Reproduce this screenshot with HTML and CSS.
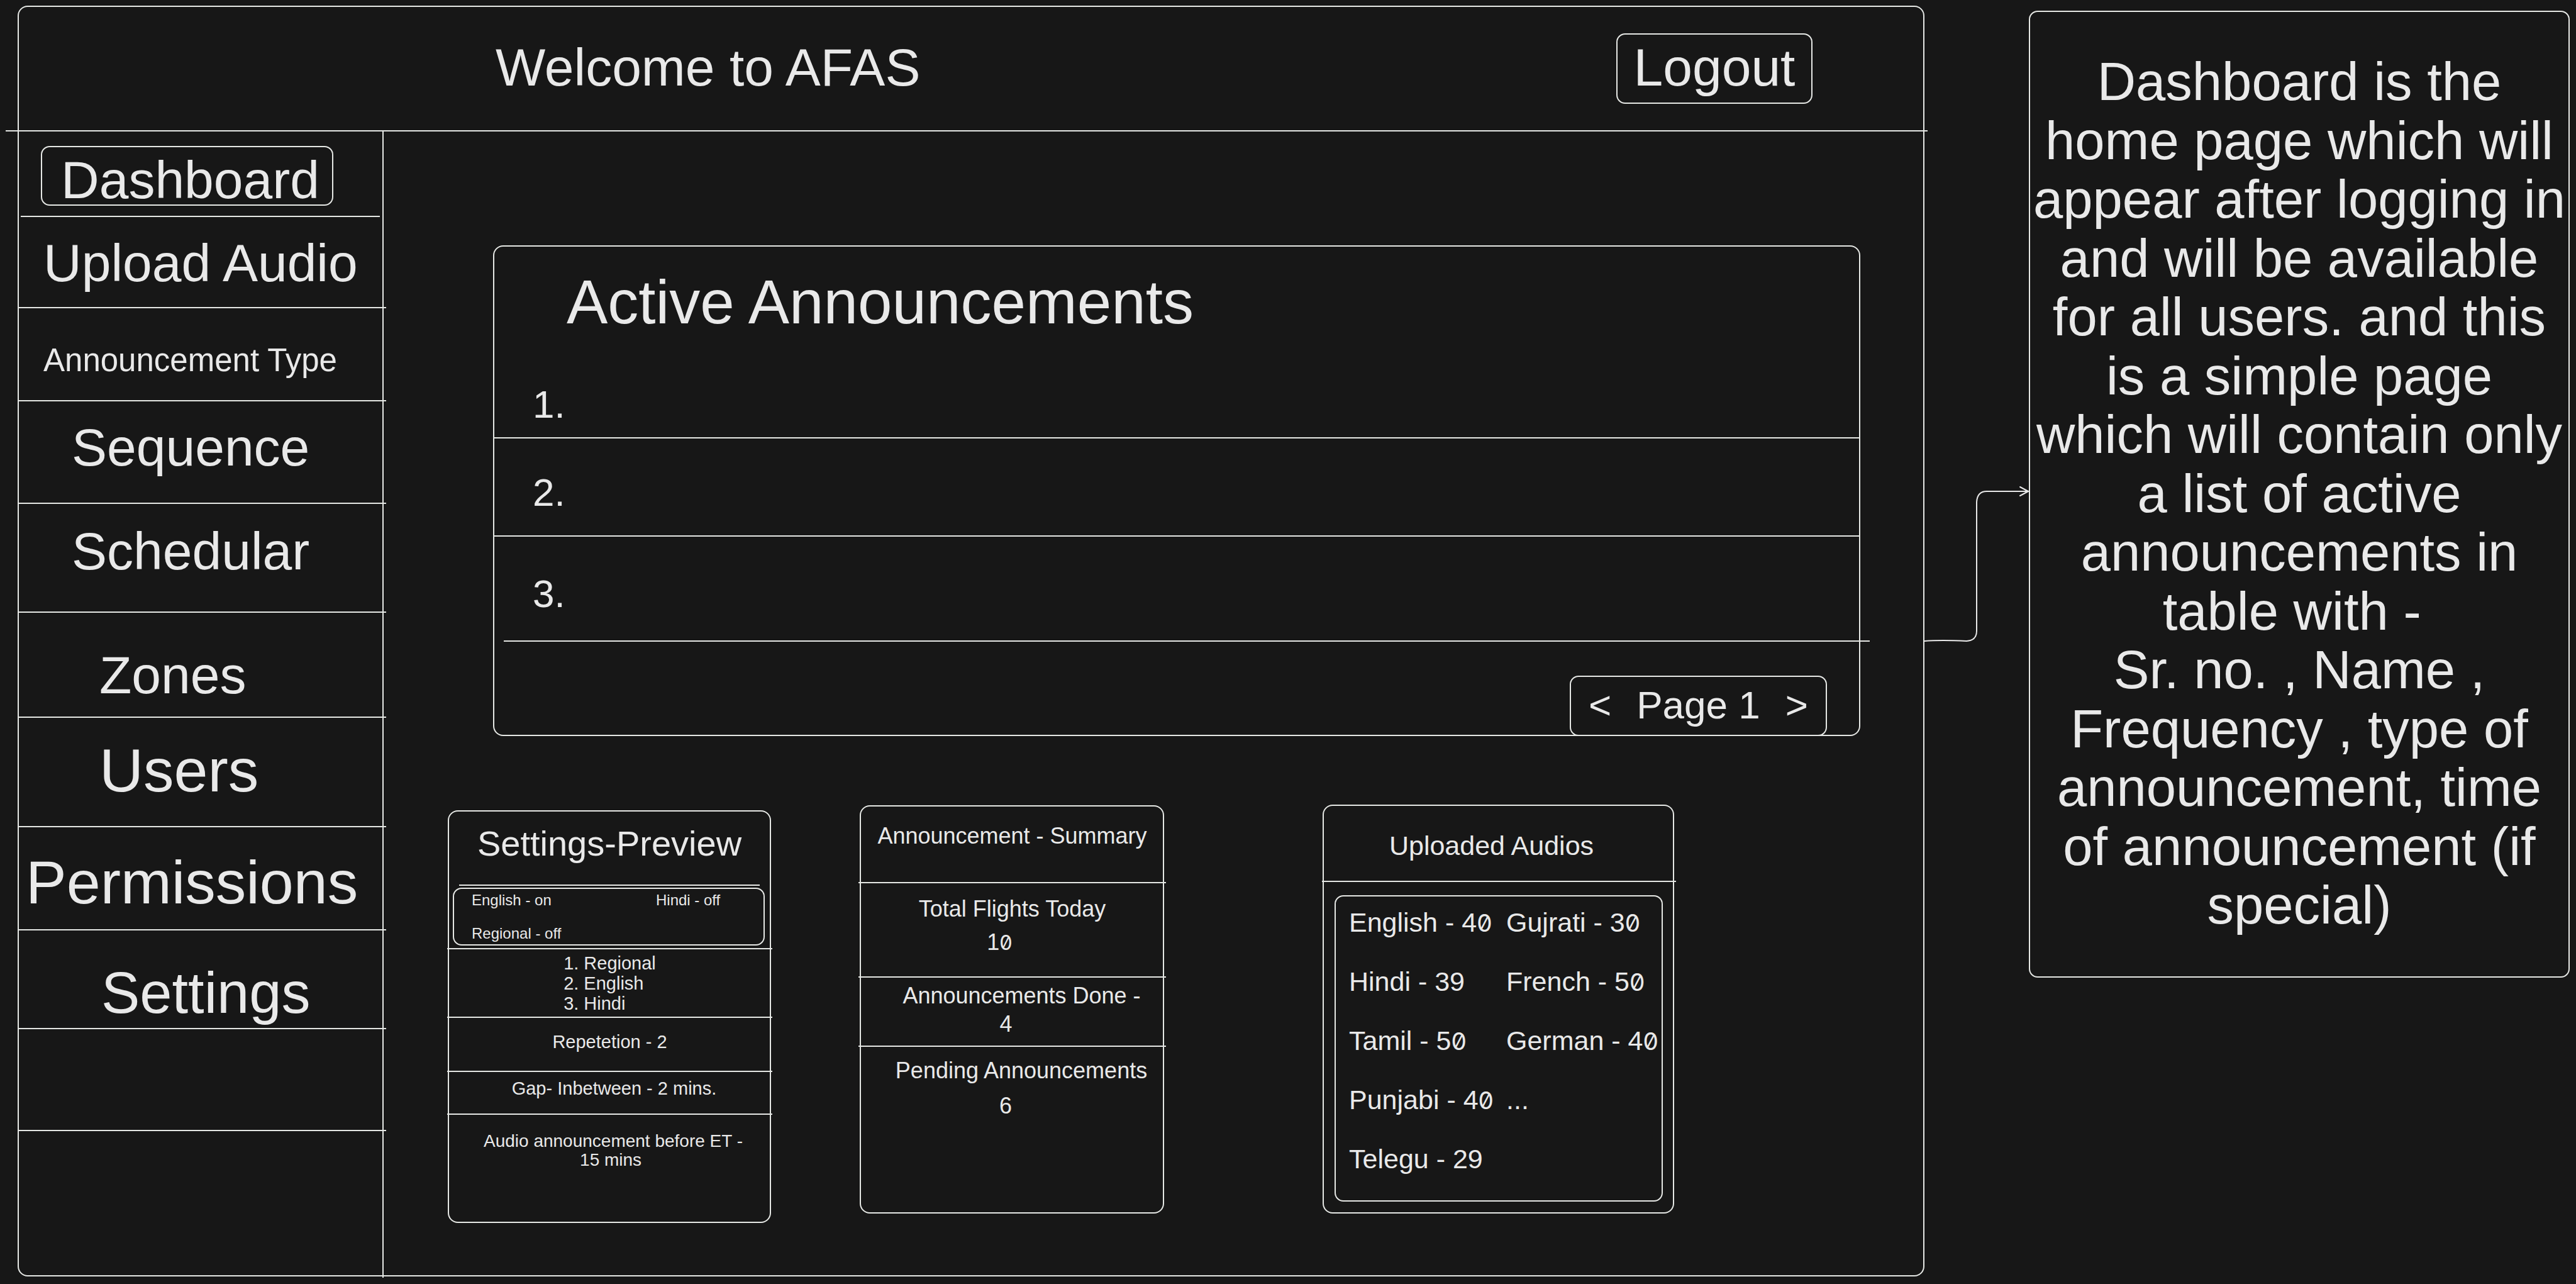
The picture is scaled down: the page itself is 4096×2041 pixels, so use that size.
FILE: index.html
```html
<!DOCTYPE html>
<html lang="en">
<head>
<meta charset="utf-8">
<title>AFAS Dashboard</title>
<link rel="stylesheet" href="styles.css">
</head>
<body>
<div class="board">
  <div class="frame">
    <header class="topbar">
      <h1 class="topbar-title">Welcome to AFAS</h1>
      <button class="logout" type="button">Logout</button>
    </header>
    <div class="workspace">
      <nav class="sidebar" aria-label="Main">
        <ul class="menu">
          <li class="menu-row row-dashboard"><a class="menu-link menu-link-active" href="#dashboard" aria-current="page">Dashboard</a></li>
          <li class="menu-row row-upload"><a class="menu-link" href="#upload">Upload Audio</a></li>
          <li class="menu-row row-type"><a class="menu-link" href="#type">Announcement Type</a></li>
          <li class="menu-row row-sequence"><a class="menu-link" href="#sequence">Sequence</a></li>
          <li class="menu-row row-schedular"><a class="menu-link" href="#schedular">Schedular</a></li>
          <li class="menu-row row-zones"><a class="menu-link" href="#zones">Zones</a></li>
          <li class="menu-row row-users"><a class="menu-link" href="#users">Users</a></li>
          <li class="menu-row row-permissions"><a class="menu-link" href="#permissions">Permissions</a></li>
          <li class="menu-row row-settings"><a class="menu-link" href="#settings">Settings</a></li>
          <li class="menu-row row-blank"></li>
        </ul>
      </nav>
      <main class="content">
        <section class="active">
          <h2 class="active-title">Active Announcements</h2>
          <ol class="active-list">
            <li class="active-row active-row-first">1.</li>
            <li class="active-row active-row-second">2.</li>
            <li class="active-row active-row-third">3.</li>
          </ol>
          <div class="active-footer">
            <div class="pager">
              <button class="pager-button" type="button" aria-label="Previous page">&lt;</button>
              <span>Page 1</span>
              <button class="pager-button" type="button" aria-label="Next page">&gt;</button>
            </div>
          </div>
        </section>

        <div class="cards">
          <section class="card settings">
            <h3 class="settings-title">Settings-Preview</h3>
            <div class="cell settings-languages">
              <div class="language-box">
                <span>English - on</span>
                <span>Hindi - off</span>
                <span>Regional - off</span>
              </div>
            </div>
            <div class="cell settings-order">
              <ol class="order-list">
                <li class="order-item"><span>1.</span><span>Regional</span></li>
                <li class="order-item"><span>2.</span><span>English</span></li>
                <li class="order-item"><span>3.</span><span>Hindi</span></li>
              </ol>
            </div>
            <p class="cell settings-repeat">Repetetion - 2</p>
            <p class="cell settings-gap">Gap- Inbetween - 2 mins.</p>
            <p class="settings-before">Audio announcement before ET -<br>15 mins&nbsp;</p>
          </section>

          <section class="card summary">
            <h3 class="cell summary-title">Announcement - Summary</h3>
            <div class="cell metric metric-total">
              <p class="metric-label">Total Flights Today</p>
              <p class="metric-value">1<span class="zero">0</span></p>
            </div>
            <div class="cell metric metric-done">
              <p class="metric-label">Announcements Done -</p>
              <p class="metric-value">4</p>
            </div>
            <div class="metric metric-pending">
              <p class="metric-label">Pending Announcements</p>
              <p class="metric-value">6</p>
            </div>
          </section>

          <section class="card uploads">
            <h3 class="cell uploads-title">Uploaded Audios</h3>
            <ul class="uploads-list">
              <li>English - 4<span class="zero">0</span></li>
              <li>Hindi - 39</li>
              <li>Tamil - 5<span class="zero">0</span></li>
              <li>Punjabi - 4<span class="zero">0</span></li>
              <li>Telegu - 29</li>
              <li>Gujrati - 3<span class="zero">0</span></li>
              <li>French - 5<span class="zero">0</span></li>
              <li>German - 4<span class="zero">0</span></li>
              <li>...</li>
            </ul>
          </section>
        </div>
      </main>
    </div>
  </div>

  <svg class="connector" viewBox="0 0 166 260" width="166" height="260" fill="none" stroke="currentColor" stroke-width="2" stroke-linecap="round" stroke-linejoin="round" aria-hidden="true">
    <path d="M0 249 Q26 247 67 249 Q83 248 83 233 V28 Q84 11 99 11 H165"/>
    <path d="M152 4 L165 11 L152 18"/>
  </svg>

  <aside class="note">
    <p class="note-text">Dashboard is the<br>home page which will<br>appear after logging in<br>and will be available<br>for all users. and this<br>is a simple page<br>which will contain only<br>a list of active<br>announcements in<br>table with -&nbsp;<br>Sr. no. , Name ,<br>Frequency , type of<br>announcement, time<br>of announcement (if<br>special)</p>
  </aside>
</div>
</body>
</html>
```
FILE: styles.css
```css
:root {
  --ink: #e9e9e9;
  --ground: #171717;
  --rule: 2px solid #e6e8e5;
}

* {
  box-sizing: border-box;
}

body,
h1,
h2,
h3,
p,
ul,
ol {
  margin: 0;
  padding: 0;
  font-size: inherit;
  font-weight: 400;
}

ul,
ol {
  list-style: none;
}

body {
  background: var(--ground);
  color: var(--ink);
  font-family: "Liberation Sans", Arial, sans-serif;
  font-size: 84px;
  line-height: 1.1;
}

a {
  color: inherit;
  text-decoration: none;
}

button {
  margin: 0;
  padding: 0;
  border: 0;
  background: none;
  color: inherit;
  font: inherit;
}

.board {
  display: grid;
  grid-template-columns: minmax(0, 1fr) 166px 860px;
  min-height: 100vh;
  padding: 9px 10px 12px 28px;
}

.frame {
  display: flex;
  flex-direction: column;
  border: var(--rule);
  border-radius: 16px;
}

/* Header: its rule runs past the frame on both sides */
.topbar {
  display: flex;
  align-items: center;
  justify-content: space-between;
  min-height: 198px;
  margin: 0 -7px 0 -21px;
  padding: 0 183px 0 779px;
  border-bottom: var(--rule);
}

.topbar-title {
  padding-bottom: 4px;
}

.logout {
  min-width: 312px;
  min-height: 112px;
  padding-bottom: 4px;
  border: var(--rule);
  border-radius: 14px;
}

.workspace {
  display: flex;
  flex: 1;
}

/* Sidebar */
.sidebar {
  flex: none;
  width: 580px;
  margin-bottom: -4px;
  border-right: var(--rule);
}

.menu {
  margin-right: -6px;
}

.menu-row {
  display: flex;
  align-items: center;
  border-bottom: var(--rule);
}

.menu-link {
  white-space: nowrap;
}

.row-dashboard {
  align-items: flex-start;
  min-height: 136px;
  margin: 0 10px 0 3px;
  padding: 23px 0 0 32px;
}

.menu-link-active {
  width: 465px;
  height: 95px;
  padding: 6px 0 0 30px;
  border: var(--rule);
  border-radius: 14px;
}

.row-upload {
  min-height: 145px;
  padding: 4px 0 0 39px;
}

.row-type {
  min-height: 148px;
  padding: 20px 0 0 39px;
  font-size: 51px;
}

.row-sequence {
  min-height: 163px;
  padding: 0 0 14px 84px;
}

.row-schedular {
  min-height: 173px;
  padding: 0 0 20px 84px;
}

.row-zones {
  min-height: 167px;
  padding: 34px 0 0 128px;
}

.row-users {
  min-height: 174px;
  padding: 0 0 4px 128px;
  font-size: 97px;
}

.row-permissions {
  min-height: 164px;
  padding: 14px 0 0 11px;
  font-size: 97px;
}

.row-settings {
  min-height: 157px;
  padding: 44px 0 0 131px;
  font-size: 92px;
}

.row-blank {
  min-height: 162px;
}

/* Main area */
.content {
  flex: 1;
  min-width: 0;
  padding: 181px 100px 83px 102px;
}

.active {
  display: flex;
  flex-direction: column;
  min-height: 780px;
  margin-left: 72px;
  border: var(--rule);
  border-radius: 16px;
}

.active-title {
  min-height: 199px;
  padding: 35px 0 0 115px;
  font-size: 98px;
}

.active-row {
  display: flex;
  align-items: center;
  padding-left: 61px;
  border-bottom: var(--rule);
  font-size: 62px;
}

.active-row-first {
  min-height: 106px;
}

.active-row-second {
  min-height: 156px;
  padding-top: 18px;
}

.active-row-third {
  min-height: 167px;
  margin: 0 -17px 0 15px;
  padding: 18px 0 0 46px;
}

.active-footer {
  display: flex;
  flex: 1;
  align-items: flex-end;
  justify-content: flex-end;
  margin: 0 51px -2px 0;
}

.pager {
  display: flex;
  align-items: center;
  gap: 40px;
  min-height: 96px;
  padding: 0 28px 2px;
  border: var(--rule);
  border-radius: 14px;
  font-size: 62px;
}

/* Cards */
.cards {
  display: grid;
  grid-template-columns: 514fr 141fr 484fr 252fr 559fr 296fr;
  align-items: start;
  margin-top: 109px;
}

.card {
  border: var(--rule);
  border-radius: 16px;
}

.cell {
  border-bottom: var(--rule);
}

.settings {
  grid-column: 1;
  min-height: 656px;
  margin-top: 9px;
  font-size: 29px;
  text-align: center;
}

.settings .cell {
  display: flex;
  justify-content: center;
  align-items: center;
  margin: 0 -4px 0 -3px;
}

.settings-title {
  display: flex;
  justify-content: center;
  align-items: center;
  min-height: 118px;
  margin: 0 16px;
  padding-bottom: 14px;
  border-bottom: var(--rule);
  font-size: 56px;
}

.settings-languages {
  min-height: 101px;
  padding: 0 12px 1px 9px;
}

.language-box {
  display: grid;
  grid-template-columns: 293px 1fr;
  row-gap: 23px;
  flex: 1;
  min-height: 92px;
  padding: 3px 0 2px 28px;
  border: var(--rule);
  border-radius: 14px;
  font-size: 24px;
  line-height: 30px;
  text-align: left;
}

.settings-order {
  min-height: 109px;
}

.order-item {
  display: flex;
  gap: 8px;
  line-height: 32px;
}

.settings-repeat {
  min-height: 86px;
  padding-bottom: 6px;
}

.settings-gap {
  min-height: 68px;
  padding: 0 0 12px 14px;
}

.settings-before {
  padding: 27px 0 0 12px;
  font-size: 28px;
  line-height: 30px;
}

.summary {
  grid-column: 3;
  min-height: 649px;
  margin-top: 1px;
  font-size: 36px;
  line-height: 45px;
  text-align: center;
}

.summary .cell {
  margin: 0 -5px 0 -4px;
}

.summary-title {
  min-height: 122px;
  padding-top: 24px;
}

.metric {
  display: flex;
  flex-direction: column;
}

.metric-label {
  padding-left: 30px;
}

.metric-value {
  padding-right: 20px;
}

.metric-total {
  gap: 8px;
  min-height: 150px;
  padding-top: 18px;
}

.metric-total .metric-label {
  padding-left: 0;
}

.metric-total .metric-value {
  padding-right: 40px;
}

.metric-done {
  min-height: 110px;
  padding-top: 6px;
}

.metric-pending {
  gap: 11px;
  padding-top: 15px;
}

.uploads {
  grid-column: 5;
  min-height: 650px;
  font-size: 43px;
  line-height: 47px;
}

.uploads .cell {
  margin: 0 -5px 0 -3px;
}

.uploads-title {
  display: flex;
  justify-content: center;
  align-items: center;
  min-height: 121px;
  padding: 8px 24px 0 0;
}

.uploads-list {
  display: grid;
  grid-template-rows: repeat(5, 47px);
  grid-template-columns: 250px 1fr;
  grid-auto-flow: column;
  row-gap: 47px;
  min-height: 487px;
  margin: 21px 16px 17px 17px;
  padding: 18px 0 0 21px;
  border: var(--rule);
  border-radius: 14px;
  white-space: nowrap;
}

/* Slashed zero for counts */
.zero {
  font-family: Inter, "Liberation Sans", sans-serif;
  font-feature-settings: "zero";
  font-size: 0.9em;
  line-height: 1;
}

/* Connector and annotation */
.connector {
  display: block;
  margin-top: 761px;
}

.note {
  display: flex;
  align-items: center;
  justify-content: center;
  align-self: start;
  min-height: 1537px;
  margin-top: 8px;
  padding-bottom: 2px;
  border: var(--rule);
  border-radius: 14px;
}

.note-text {
  font-size: 85px;
  line-height: 1.1;
  text-align: center;
  white-space: nowrap;
}
```
